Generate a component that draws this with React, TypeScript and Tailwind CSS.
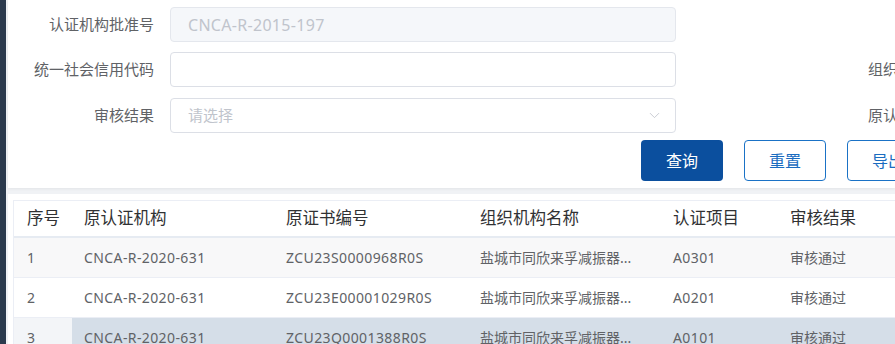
import { ChevronDown } from "lucide-react";

const rows = [
  { no: 1, org: "CNCA-R-2020-631", cert: "ZCU23S0000968R0S", name: "盐城市同欣来孚减振器...", item: "A0301", result: "审核通过" },
  { no: 2, org: "CNCA-R-2020-631", cert: "ZCU23E00001029R0S", name: "盐城市同欣来孚减振器...", item: "A0201", result: "审核通过" },
  { no: 3, org: "CNCA-R-2020-631", cert: "ZCU23Q0001388R0S", name: "盐城市同欣来孚减振器...", item: "A0101", result: "审核通过" },
];

function Label({ children }: { children: React.ReactNode }) {
  return <div className="w-[146px] shrink-0 text-right text-[15px] text-[#606266]">{children}</div>;
}

export default function App() {
  const font = { fontFamily: '"Noto Sans", "Noto Sans CJK SC", sans-serif' };

  return (
    <div className="flex h-[344px] w-[895px] overflow-hidden bg-[#f0f2f5]" style={font}>
      <div className="w-[6px] shrink-0 bg-[#2b3a4d]" />
      <div className="flex min-w-0 flex-1 flex-col pl-[2px]">
        {/* search form */}
        <div className="h-[188px] shrink-0 bg-white pt-[7px] shadow-[0_1px_3px_rgba(0,0,0,0.06)]">
          <div className="flex h-[35px] items-center">
            <Label>认证机构批准号</Label>
            <div className="ml-[16px] flex h-[35px] w-[506px] shrink-0 items-center rounded-[4px] border border-[#e4e7ed] bg-[#f5f7fa] px-[17px] text-[16px] tracking-[0.3px] text-[#c0c4cc]">
              CNCA-R-2015-197
            </div>
          </div>
          <div className="mt-[10px] flex h-[35px] items-center">
            <Label>统一社会信用代码</Label>
            <div className="ml-[16px] h-[35px] w-[506px] shrink-0 rounded-[4px] border border-[#dcdfe6] bg-white" />
            <div className="ml-[192px] whitespace-nowrap text-[15px] text-[#606266]">组织机构名称</div>
          </div>
          <div className="mt-[11px] flex h-[35px] items-center">
            <Label>审核结果</Label>
            <div className="ml-[16px] flex h-[35px] w-[506px] shrink-0 items-center justify-between rounded-[4px] border border-[#dcdfe6] bg-white pl-[17px] pr-[12px] text-[15px] text-[#c0c4cc]">
              <span>请选择</span>
              <ChevronDown size={17} strokeWidth={1.2} className="text-[#c0c4cc]" />
            </div>
            <div className="ml-[192px] whitespace-nowrap text-[15px] text-[#606266]">原认证机构</div>
          </div>
          <div className="mt-[7px] flex gap-[21px] pl-[633px]">
            <button className="h-[41px] w-[82px] shrink-0 rounded-[4px] bg-[#0b4f9e] text-[16px] text-white">查询</button>
            <button className="h-[41px] w-[82px] shrink-0 rounded-[4px] border border-[#1a72c6] bg-white text-[16px] text-[#1a6cc0]">重置</button>
            <button className="h-[41px] w-[82px] shrink-0 rounded-[4px] border border-[#1a72c6] bg-white text-[16px] text-[#1a6cc0]">导出</button>
          </div>
        </div>

        {/* table */}
        <div className="mt-[6px] flex-1 bg-white pl-[5px] pt-[6px]">
          <div className="border-l border-t border-[#ebeef5]">
            <div className="flex h-[37px] items-center border-b-2 border-[#e6ebf2] text-[16.5px] text-[#303133]">
              <div className="w-[58px] shrink-0 pl-[13px]">序号</div>
              <div className="w-[202px] shrink-0 pl-[12px]">原认证机构</div>
              <div className="w-[194px] shrink-0 pl-[12px]">原证书编号</div>
              <div className="w-[193px] shrink-0 pl-[12px]">组织机构名称</div>
              <div className="w-[117px] shrink-0 pl-[12px]">认证项目</div>
              <div className="w-[120px] shrink-0 pl-[12px]">审核结果</div>
            </div>
            {rows.map((r) => {
              const hover = r.no === 3;
              const stripe = r.no % 2 === 1 && !hover;
              return (
                <div
                  key={r.no}
                  className={`flex h-[40px] items-center border-b border-[#ebeef5] text-[14px] text-[#606266] ${
                    hover ? "bg-[#d5dee8]" : stripe ? "bg-[#f8f8f9]" : "bg-white"
                  }`}
                >
                  <div className={`flex h-full w-[58px] shrink-0 items-center pl-[13px] ${hover ? "bg-[#f3f5f8]" : ""}`}>
                    {r.no}
                  </div>
                  <div className="w-[202px] shrink-0 pl-[12px] tracking-[0.4px]">{r.org}</div>
                  <div className="w-[194px] shrink-0 pl-[12px] tracking-[0.4px]">{r.cert}</div>
                  <div className="w-[193px] shrink-0 pl-[12px]">{r.name}</div>
                  <div className="w-[117px] shrink-0 pl-[12px] tracking-[0.4px]">{r.item}</div>
                  <div className="w-[120px] shrink-0 pl-[12px]">{r.result}</div>
                </div>
              );
            })}
          </div>
        </div>
      </div>
    </div>
  );
}
